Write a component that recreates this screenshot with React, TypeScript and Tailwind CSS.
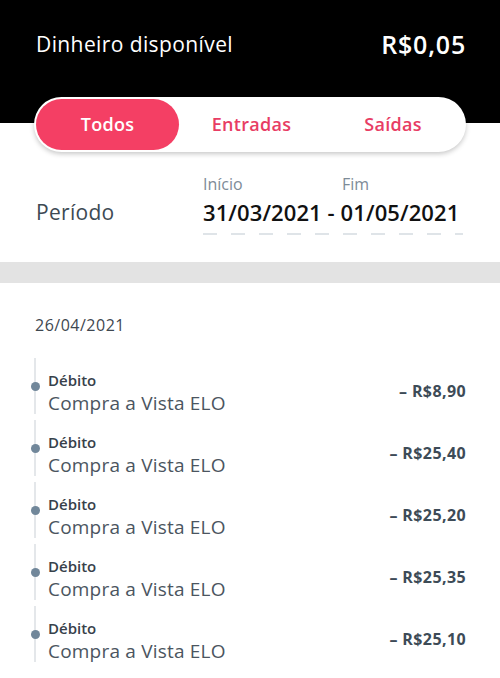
import React from "react";

const rows = ["– R$8,90", "– R$25,40", "– R$25,20", "– R$25,35", "– R$25,10"];

export default function App() {
  const font = { fontFamily: '"Open Sans", "Noto Sans", sans-serif' };
  return (
    <div className="w-[500px] h-[678px] bg-white overflow-hidden" style={font}>
      <div className="h-[123px] bg-black flex items-start justify-between pl-[36px] pr-[34px] pt-[29px]">
        <span className="text-white text-[21px] leading-[30px] tracking-[0.4px]">Dinheiro disponível</span>
        <span className="text-white text-[25px] leading-[30px] font-semibold tracking-[0.8px]">R$0,05</span>
      </div>
      <div className="mx-[34px] -mt-[26px] h-[55px] rounded-full bg-white p-[2px] flex items-center shadow-[0_2px_5px_rgba(0,0,0,0.22)] relative">
        <div className="w-[143px] h-[51px] rounded-full bg-[#f43f64] flex items-center justify-center text-white text-[18px] font-semibold tracking-[0.3px]">Todos</div>
        <div className="flex-1 flex items-center justify-center text-[#e83d64] text-[18px] font-semibold tracking-[0.3px] pl-[2px]">Entradas</div>
        <div className="w-[142px] flex items-center justify-center text-[#e83d64] text-[18px] font-semibold tracking-[0.3px]">Saídas</div>
      </div>
      <div className="flex items-start pl-[36px] pt-[22px] h-[110px]">
        <div className="w-[167px] pt-[23px] text-[21px] text-[#3d4a54] tracking-[0.3px]">Período</div>
        <div className="flex flex-col">
          <div className="flex text-[16px] text-[#7d8b97] leading-[20px]">
            <span className="w-[139px]">Início</span>
            <span>Fim</span>
          </div>
          <div className="text-[22px] font-semibold text-[#111] leading-[30px] mt-[3px] tracking-[0.1px]">31/03/2021 - 01/05/2021</div>
          <div className="mt-[6px] w-[260px] h-[2px] bg-[repeating-linear-gradient(90deg,#dfe4e8_0_14px,transparent_14px_28px)]" />
        </div>
      </div>
      <div className="h-[21px] bg-[#e3e3e3]" />
      <div className="pl-[35px] pt-[32px] text-[16px] text-[#3e4750] leading-[20px] tracking-[0.5px]">26/04/2021</div>
      <div className="mt-[20px] flex flex-col">
        {rows.map((amt, i) => (
          <div key={i} className="h-[62px] flex items-stretch pr-[34px]">
            <div className="w-[48px] relative shrink-0">
              <div className="absolute left-[34px] top-[3px] bottom-[3px] w-[2px] bg-[#e4e7ea]" />
              <div className="absolute left-[31px] top-[27px] w-[9px] h-[9px] rounded-full bg-[#71879a]" />
            </div>
            <div className="flex-1 flex flex-col pt-[15px]">
              <span className="text-[15px] font-semibold text-[#37414a] leading-[20px]">Débito</span>
              <span className="text-[19px] text-[#4b5560] leading-[27px] tracking-[0.2px]">Compra a Vista ELO</span>
            </div>
            <div className="pt-[25px] text-[16px] font-bold text-[#3d4b57] leading-[22px] tracking-[0.4px]">{amt}</div>
          </div>
        ))}
      </div>
    </div>
  );
}
